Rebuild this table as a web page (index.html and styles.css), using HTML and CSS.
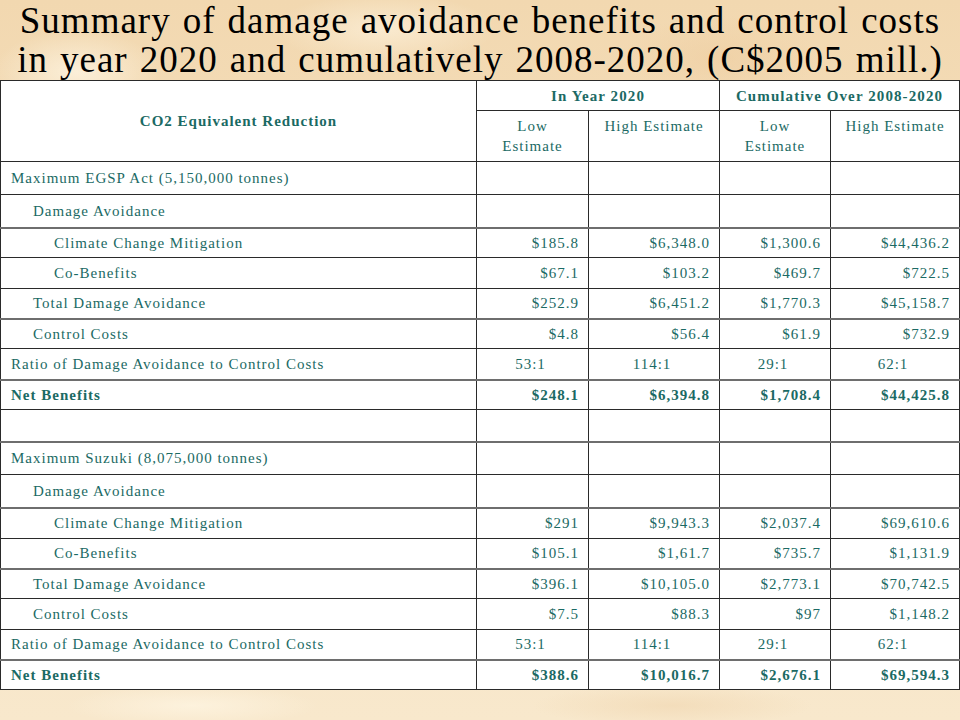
FILE: index.html
```html
<!DOCTYPE html>
<html lang="en">
<head>
<meta charset="utf-8">
<title>Summary of damage avoidance benefits</title>
<link rel="stylesheet" href="styles.css">
</head>
<body>
<div class="slide">
  <h1 class="title">Summary of damage avoidance benefits and control costs<br>in year 2020 and cumulatively 2008-2020, (C$2005 mill.)</h1>
  <table class="grid">
    <colgroup>
      <col class="c1"><col class="c2"><col class="c3"><col class="c4"><col class="c5">
    </colgroup>
    <thead>
      <tr class="h30">
        <th rowspan="2" class="corner">CO2 Equivalent Reduction</th>
        <th colspan="2" class="group">In Year 2020</th>
        <th colspan="2" class="group">Cumulative Over 2008-2020</th>
      </tr>
      <tr class="h51">
        <td class="sub">Low<br>Estimate</td>
        <td class="sub">High Estimate</td>
        <td class="sub">Low<br>Estimate</td>
        <td class="sub">High Estimate</td>
      </tr>
    </thead>
    <tbody>
      <tr class="h33"><td class="lbl l0">Maximum EGSP Act (5,150,000 tonnes)</td><td></td><td></td><td></td><td></td></tr>
      <tr class="h33"><td class="lbl l1">Damage Avoidance</td><td></td><td></td><td></td><td></td></tr>
      <tr class="h30 gt"><td class="lbl l2">Climate Change Mitigation</td><td class="num">$185.8</td><td class="num">$6,348.0</td><td class="num">$1,300.6</td><td class="num">$44,436.2</td></tr>
      <tr class="h31"><td class="lbl l2">Co-Benefits</td><td class="num">$67.1</td><td class="num">$103.2</td><td class="num">$469.7</td><td class="num">$722.5</td></tr>
      <tr class="h30"><td class="lbl l1">Total Damage Avoidance</td><td class="num">$252.9</td><td class="num">$6,451.2</td><td class="num">$1,770.3</td><td class="num">$45,158.7</td></tr>
      <tr class="h30 gt"><td class="lbl l1">Control Costs</td><td class="num">$4.8</td><td class="num">$56.4</td><td class="num">$61.9</td><td class="num">$732.9</td></tr>
      <tr class="h31"><td class="lbl l0">Ratio of Damage Avoidance to Control Costs</td><td class="ratio">53:1</td><td class="ratio">114:1</td><td class="ratio">29:1</td><td class="ratio">62:1</td></tr>
      <tr class="h30 gt bold"><td class="lbl l0">Net Benefits</td><td class="num">$248.1</td><td class="num">$6,394.8</td><td class="num">$1,708.4</td><td class="num">$44,425.8</td></tr>
      <tr class="h32"><td></td><td></td><td></td><td></td><td></td></tr>
      <tr class="h33 gt"><td class="lbl l0">Maximum Suzuki (8,075,000 tonnes)</td><td></td><td></td><td></td><td></td></tr>
      <tr class="h33"><td class="lbl l1">Damage Avoidance</td><td></td><td></td><td></td><td></td></tr>
      <tr class="h31 gt"><td class="lbl l2">Climate Change Mitigation</td><td class="num">$291</td><td class="num">$9,943.3</td><td class="num">$2,037.4</td><td class="num">$69,610.6</td></tr>
      <tr class="h30"><td class="lbl l2">Co-Benefits</td><td class="num">$105.1</td><td class="num">$1,61.7</td><td class="num">$735.7</td><td class="num">$1,131.9</td></tr>
      <tr class="h30 gt"><td class="lbl l1">Total Damage Avoidance</td><td class="num">$396.1</td><td class="num">$10,105.0</td><td class="num">$2,773.1</td><td class="num">$70,742.5</td></tr>
      <tr class="h31"><td class="lbl l1">Control Costs</td><td class="num">$7.5</td><td class="num">$88.3</td><td class="num">$97</td><td class="num">$1,148.2</td></tr>
      <tr class="h30"><td class="lbl l0">Ratio of Damage Avoidance to Control Costs</td><td class="ratio">53:1</td><td class="ratio">114:1</td><td class="ratio">29:1</td><td class="ratio">62:1</td></tr>
      <tr class="h30 gt bold"><td class="lbl l0">Net Benefits</td><td class="num">$388.6</td><td class="num">$10,016.7</td><td class="num">$2,676.1</td><td class="num">$69,594.3</td></tr>
    </tbody>
  </table>
</div>
</body>
</html>
```
FILE: styles.css
```css
html, body {
  margin: 0;
  padding: 0;
}
body {
  width: 960px;
  height: 720px;
  overflow: hidden;
  background-color: #f5e0bd;
  background-image:
    radial-gradient(ellipse 120px 60px at 8% 10%, rgba(255,248,232,0.7), rgba(255,248,232,0) 70%),
    radial-gradient(ellipse 160px 50px at 40% 4%, rgba(255,246,228,0.6), rgba(255,246,228,0) 70%),
    radial-gradient(ellipse 140px 60px at 75% 8%, rgba(238,205,160,0.6), rgba(238,205,160,0) 70%),
    radial-gradient(ellipse 180px 30px at 20% 98%, rgba(255,246,228,0.7), rgba(255,246,228,0) 70%),
    radial-gradient(ellipse 200px 30px at 70% 98%, rgba(240,214,176,0.6), rgba(240,214,176,0) 70%),
    linear-gradient(180deg, #f2d8b0 0%, #f6e3c4 60%, #f8e8cc 100%);
  font-family: "Liberation Serif", serif;
}
.slide {
  display: flex;
  flex-direction: column;
  width: 960px;
}
.title {
  margin: 0;
  height: 80px;
  box-sizing: border-box;
  padding-top: 1px;
  font-family: "Liberation Serif", serif;
  font-weight: normal;
  font-size: 37px;
  line-height: 39px;
  color: #000;
  text-align: center;
  letter-spacing: 1px;
  word-spacing: 1.8px;
}
.grid {
  border-collapse: collapse;
  table-layout: fixed;
  width: 959px;
  background: #fff;
  color: #1b6a64;
  font-family: "Liberation Serif", serif;
  font-size: 15px;
  letter-spacing: 1px;
}
.c1 { width: 476px; }
.c2 { width: 112px; }
.c3 { width: 131px; }
.c4 { width: 111px; }
.c5 { width: 129px; }
.grid th, .grid td {
  border: 1px solid #2a2a2a;
  padding: 0;
  vertical-align: middle;
  line-height: 20px;
}
.grid tr.gt td, .grid tr.gt th {
  border-top: 2px solid #6e6e6e;
}
.h30 { height: 30px; }
.h31 { height: 31px; }
.h32 { height: 32px; }
.h33 { height: 33px; }
.h51 { height: 51px; }
.corner, .group {
  font-weight: bold;
  font-size: 15px;
  text-align: center;
}
.group {
  letter-spacing: 1.1px;
}
.sub {
  text-align: center;
  vertical-align: top !important;
  padding-top: 5px !important;
}
.lbl {
  text-align: left;
  white-space: nowrap;
}
.l0 { padding-left: 10px !important; }
.l1 { padding-left: 32px !important; }
.l2 { padding-left: 53px !important; }
.num {
  text-align: right;
  padding-right: 9px !important;
}
.ratio {
  text-align: center;
  padding-right: 4px !important;
}
.bold td {
  font-weight: bold;
}
```
